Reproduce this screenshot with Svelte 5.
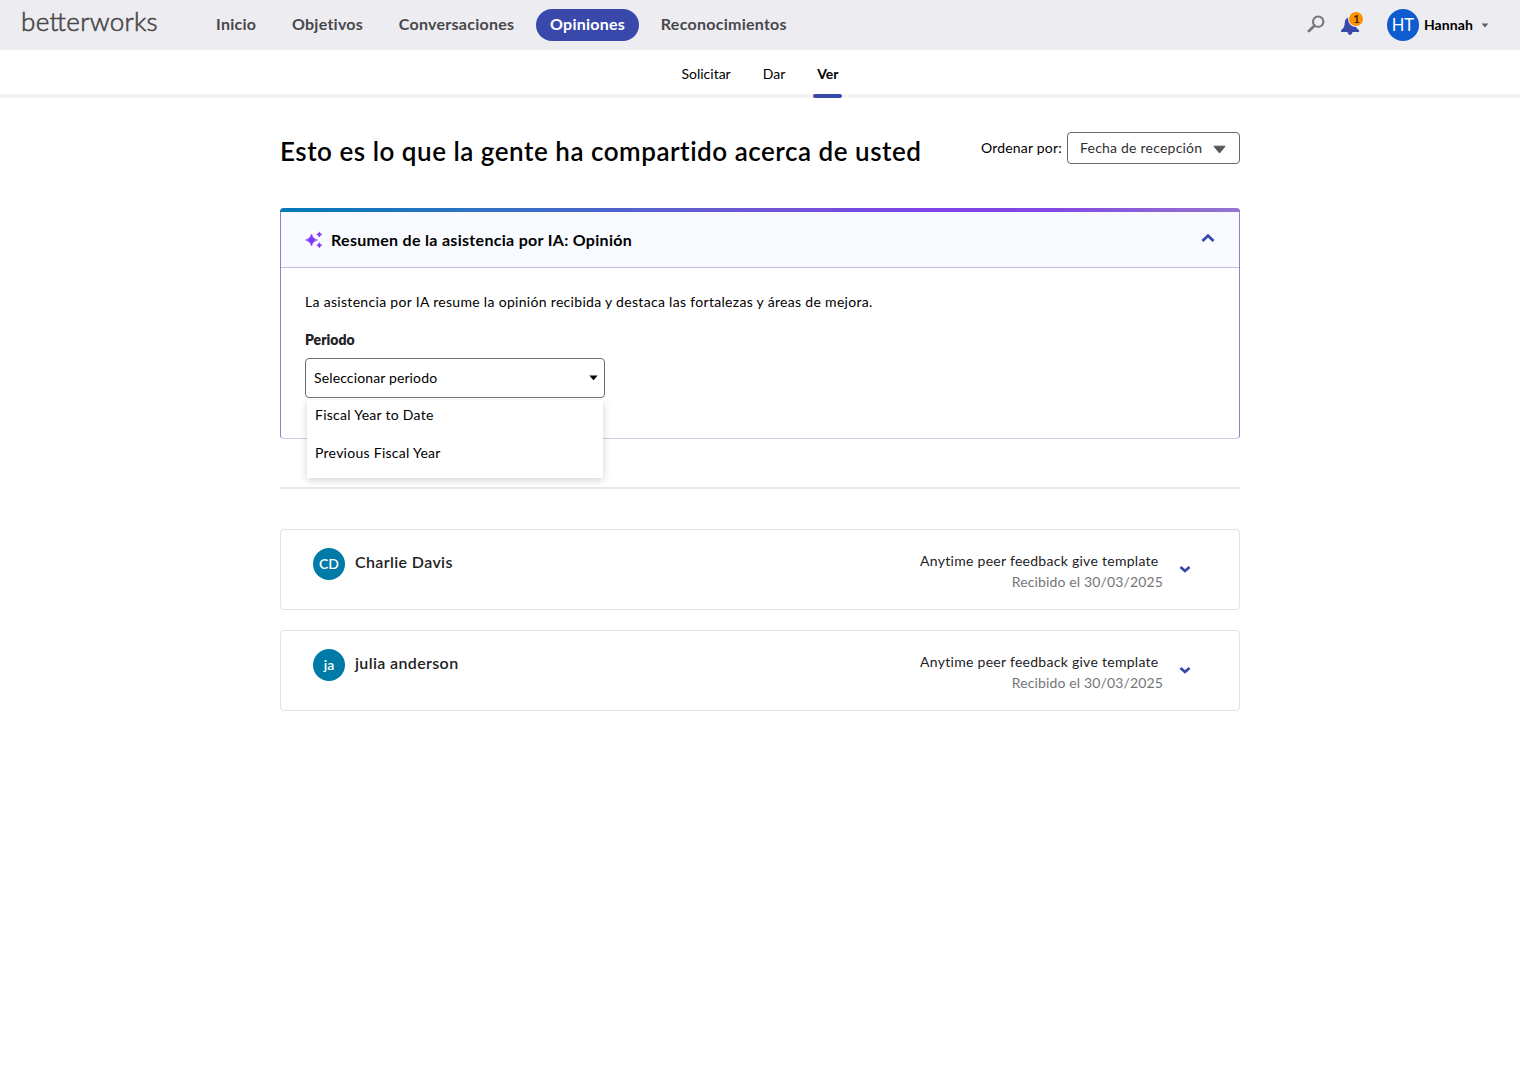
<script>
  const nav = ['Inicio', 'Objetivos', 'Conversaciones', 'Opiniones', 'Reconocimientos'];
  const tabs = ['Solicitar', 'Dar', 'Ver'];
  const periods = ['Fiscal Year to Date', 'Previous Fiscal Year'];
  const feedback = [
    { initials: 'CD', name: 'Charlie Davis' },
    { initials: 'ja', name: 'julia anderson' }
  ];
  let activeNav = $state('Opiniones');
  let activeTab = $state('Ver');
</script>

<header class="topbar">
  <div class="logo">be<span class="ligature">t</span>terworks</div>
  <nav class="nav">
    {#each nav as item}
      <button class="nav-item" class:active={item === activeNav} onclick={() => (activeNav = item)}>{item}</button>
    {/each}
  </nav>
  <div class="tools">
    <svg class="search" width="18" height="18" viewBox="0 0 18 18" fill="none" stroke="#77777a">
      <circle cx="11.2" cy="6.7" r="5.2" stroke-width="2.1" />
      <path d="M7.4 10.7 1.9 15.9" stroke-width="2.8" stroke-linecap="round" />
    </svg>
    <div class="bell">
      <svg width="20" height="20" viewBox="0 0 20 20" fill="#3949ab">
        <path d="M10 1.3c-3.200 0-5 2.300-5.200 5.300-.2 3.300-.8 5.400-2.900 7-.8.600-1.200 1.200-.9 1.800.2.400.7.500 1.400.500h5.100c.2 1.500 1.200 2.900 2.500 2.900s2.400-1.400 2.500-2.900h5.200c.7 0 1.200-.1 1.400-.5.300-.6-.1-1.200-.9-1.800-2.100-1.600-2.700-3.700-2.900-7C15 3.600 13.200 1.300 10 1.300z" />
      </svg>
      <span class="badge">1</span>
    </div>
    <div class="user">
      <span class="avatar me">HT</span>
      <span class="username">Hannah</span>
      <svg width="8" height="5" viewBox="0 0 8 5"><path d="M.6.4h6.800L4 4.500z" fill="#606063" /></svg>
    </div>
  </div>
</header>

<nav class="tabs">
  {#each tabs as tab}
    <button class="tab" class:current={tab === activeTab} onclick={() => (activeTab = tab)}>{tab}</button>
  {/each}
</nav>

<main class="content">
  <div class="title-row">
    <h1>Esto es lo que la gente ha compartido acerca de usted</h1>
    <div class="sort">
      <span class="sort-label">Ordenar por:</span>
      <button class="sort-select">
        <span>Fecha de recepción</span>
        <svg width="13" height="9" viewBox="0 0 13 9"><path d="M.9 1.200h11.200L6.500 8z" fill="#55555a" stroke="#55555a" stroke-linejoin="round" /></svg>
      </button>
    </div>
  </div>

  <section class="panel">
    <div class="stripe"></div>
    <div class="panel-head">
      <svg width="18" height="18" viewBox="0 0 18 18" fill="#7e3af2">
        <path d="M6.500 3q1.100 4.900 6 6-4.900 1.100-6 6-1.100-4.900-6-6 4.900-1.100 6-6z" stroke="#7e3af2" stroke-width=".5" />
        <path d="M14.300.8q.6 2.100 2.700 2.700-2.100.6-2.700 2.700-.6-2.100-2.700-2.700 2.100-.6 2.700-2.700z" stroke="#7e3af2" stroke-width=".4" />
        <path d="M14.300 11.500q.6 2.100 2.700 2.700-2.100.6-2.700 2.700-.6-2.100-2.700-2.700 2.100-.6 2.700-2.700z" stroke="#7e3af2" stroke-width=".4" />
      </svg>
      <h2>Resumen de la asistencia por IA: Opinión</h2>
      <svg class="chevron-up" width="14" height="10" viewBox="0 0 14 10" fill="none" stroke="#3949ab" stroke-width="2.800"><path d="M1.400 8 7 2.700 12.600 8" /></svg>
    </div>
    <div class="panel-body">
      <p>La asistencia por IA resume la opinión recibida y destaca las fortalezas y áreas de mejora.</p>
      <div class="label">Periodo</div>
      <div class="select-wrap">
        <button class="select">
          <span>Seleccionar periodo</span>
          <svg width="9" height="6" viewBox="0 0 9 6"><path d="M.3.500h8.400L5 4.700q-.5.500-1 0z" fill="#000" /></svg>
        </button>
        <div class="menu">
          {#each periods as period}
            <div class="option">{period}</div>
          {/each}
        </div>
      </div>
    </div>
  </section>

  <hr />

  <div class="cards">
    {#each feedback as entry}
      <article class="card">
        <span class="avatar peer">{entry.initials}</span>
        <span class="name">{entry.name}</span>
        <div class="meta">
          <span class="template">Anytime peer feedback give template</span>
          <span class="date">Recibido el 30/03/2025</span>
        </div>
        <svg width="12" height="9" viewBox="0 0 12 9" fill="none" stroke="#3949ab" stroke-width="2.800"><path d="M1.500 2 6 6 10.500 2" /></svg>
      </article>
    {/each}
  </div>
</main>

<style>
  :global(body) {
    margin: 0;
    background: #fff;
    color: #000;
    font-family: Lato, 'Liberation Sans', sans-serif;
    font-size: 14px;
  }
  button {
    font: inherit;
    color: inherit;
    background: none;
    border: 0;
    margin: 0;
    padding: 0;
    white-space: nowrap;
    cursor: pointer;
  }
  h1, h2, p { margin: 0; white-space: nowrap; }
  svg { display: block; flex: none; }

  .topbar {
    height: 50px;
    display: flex;
    align-items: center;
    background: #edecf1;
    box-sizing: border-box;
    padding: 0 31px 0 21px;
  }
  .logo {
    width: 181px;
    padding-bottom: 8px;
    color: #48484a;
    font-size: 26px;
    line-height: 30px;
    font-weight: 300;
    letter-spacing: 0.3px;
    -webkit-text-stroke: 0.6px #48484a;
  }
  .ligature { letter-spacing: -1.300px; }
  .nav { display: flex; gap: 7.700px; }
  .nav-item {
    height: 32px;
    padding: 0 14px 2px;
    border-radius: 16px;
    color: #48484b;
    font-size: 16px;
    line-height: 30px;
    font-weight: 700;
    letter-spacing: 0.26px;
  }
  .nav-item.active { background: #3949ab; color: #fff; }
  .tools { margin-left: auto; display: flex; align-items: center; }
  .search { margin: 0 15px 2px 0; }
  .bell { position: relative; margin: 2px 26.500px 0 0; }
  .badge {
    position: absolute;
    left: 9px;
    top: -4px;
    width: 14px;
    height: 14px;
    border-radius: 50%;
    background: #ff9100;
    box-shadow: 0 0 0 1px #edecf1;
    color: #111;
    font-size: 12px;
    line-height: 14px;
    font-weight: 500;
    text-align: center;
  }
  .user { display: flex; align-items: center; }
  .username { margin: 0 8px 0 5px; padding-bottom: 2px; font-weight: 700; letter-spacing: 0.1px; }
  .avatar {
    flex: none;
    width: 32px;
    height: 32px;
    border-radius: 50%;
    color: #fff;
    text-align: center;
    line-height: 32px;
  }
  .avatar.me { background: #0f5bd0; font-size: 16.500px; line-height: 33px; }
  .avatar.peer { background: #007ba8; font-size: 14px; line-height: 31px; font-weight: 600; }

  .tabs {
    height: 44px;
    border-bottom: 4px solid #f4f4f5;
    display: flex;
    justify-content: center;
    gap: 24px;
  }
  .tab {
    position: relative;
    height: 48px;
    padding: 0 4px;
    line-height: 48px;
  }
  .tab.current { font-weight: 700; }
  .tab.current::after {
    content: '';
    position: absolute;
    left: -0.500px;
    right: 0.500px;
    bottom: 0;
    height: 4px;
    border-radius: 2px;
    background: #3949ab;
  }

  .content { width: 960px; margin: 0 auto; }
  .title-row { height: 110px; display: flex; justify-content: space-between; align-items: flex-start; }
  h1 { padding-top: 36px; font-size: 26px; line-height: 34px; font-weight: 600; letter-spacing: 0.52px; }
  .sort { display: flex; align-items: center; gap: 5px; padding-top: 34px; }
  .sort-label { padding-bottom: 1px; letter-spacing: 0.2px; }
  .sort-select {
    width: 173px;
    height: 32px;
    box-sizing: border-box;
    display: flex;
    align-items: center;
    justify-content: space-between;
    padding: 0 13px 0 12px;
    border: 1px solid #68686c;
    border-radius: 4px;
    color: #303033;
    letter-spacing: 0.22px;
  }
  .sort-select span { padding-bottom: 1px; }
  .sort-select svg { margin-top: 3px; }

  .panel {
    height: 231px;
    box-sizing: border-box;
    display: flex;
    flex-direction: column;
    border: 1px solid #8784cf;
    border-bottom-color: #c9c9ed;
    border-top: 0;
    border-radius: 4px;
  }
  .stripe {
    height: 4px;
    flex: none;
    margin: 0 -1px;
    border-radius: 4px 4px 0 0;
    background: linear-gradient(90deg, #007ab8 0%, #2e72c4 20%, #6c57d4 48%, #7e43e8 68%, #8148e2 80%, #9575cd 100%);
  }
  .panel-head {
    height: 55px;
    flex: none;
    display: flex;
    align-items: center;
    padding: 0 24px;
    background: #f9faff;
    border-bottom: 1px solid #bfbde9;
  }
  .panel-head > svg:first-child { margin-top: 1px; }
  h2 { margin-left: 8px; font-size: 16px; line-height: 22px; font-weight: 700; letter-spacing: 0.3px; }
  .chevron-up { margin: 0 0 3px auto; }
  .panel-body { padding: 24px 24px 0; }
  p { line-height: 20px; letter-spacing: 0.31px; }
  .label { margin-top: 18px; line-height: 20px; font-weight: 800; color: #222226; }
  .select-wrap { position: relative; width: 300px; margin-top: 8px; }
  .select {
    width: 300px;
    height: 40px;
    box-sizing: border-box;
    display: flex;
    align-items: center;
    justify-content: space-between;
    padding: 0 6px 0 8px;
    border: 1px solid #6f6f73;
    border-radius: 4px;
    letter-spacing: 0.13px;
  }
  .select span { padding-bottom: 2px; }
  .menu {
    position: absolute;
    top: 42px;
    left: 2px;
    width: 296px;
    height: 78px;
    background: #fff;
    box-shadow: 0 2px 8px rgba(0, 0, 0, 0.18);
    clip-path: inset(-1px -10px -12px -10px);
  }
  .option { height: 38px; padding-left: 8px; line-height: 30px; letter-spacing: 0.27px; }

  hr { height: 2px; margin: 48px 0 40px; border: 0; background: #e9e9eb; }

  .cards { display: flex; flex-direction: column; gap: 20px; }
  .card {
    height: 81px;
    box-sizing: border-box;
    display: flex;
    align-items: flex-start;
    padding: 18px 48px 0 32px;
    border: 1px solid #e0e0e6;
    border-radius: 4px;
  }
  .name { margin-left: 10px; padding-top: 3px; font-size: 16px; line-height: 22px; font-weight: 600; color: #222224; letter-spacing: 0.37px; }
  .meta { margin-left: auto; display: flex; flex-direction: column; align-items: flex-end; padding-top: 2px; line-height: 21px; }
  .template { margin-right: 4.500px; color: #222224; letter-spacing: 0.28px; }
  .date { color: #757578; letter-spacing: 0.14px; }
  .card svg { margin: 17px 0 0 16px; }
</style>
